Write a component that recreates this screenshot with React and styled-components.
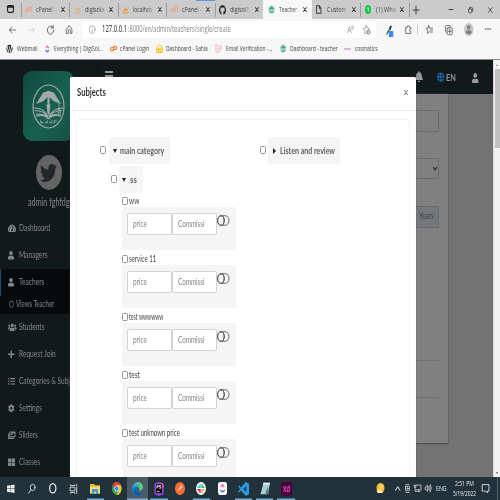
import React, { useLayoutEffect, useRef, useState } from "react";
import styled, { createGlobalStyle, css } from "styled-components";
import {
  FaUser, FaUsers, FaPlus, FaListUl, FaCog, FaImages, FaThLarge, FaBell, FaGlobe,
  FaTwitter, FaWordpress, FaGithub, FaTachometerAlt, FaWindows, FaRegCircle, FaLaravel,
} from "react-icons/fa";

const Global = createGlobalStyle`
  *, *::before, *::after { box-sizing: border-box; }
  body { margin: 0; overflow: hidden; }
`;

const ui = '"Open Sans", "Noto Sans", sans-serif';
const lato = 'Lato, "Open Sans", sans-serif';

/* ---------- shared pieces ---------- */

const LabelBox = styled.span`
  display: block;
  flex: none;
  width: ${(p) => p.$w}px;
  margin-left: ${(p) => p.$ml || 0}px;
  font-size: ${(p) => p.$size || 7.6}px;
  font-weight: ${(p) => p.$weight || 400};
  color: ${(p) => p.$color || "inherit"};
  line-height: 1.2;
  white-space: nowrap;
`;
const LabelInner = styled.span`
  display: inline-block;
  vertical-align: top;
  transform-origin: 0 50%;
`;

function Label({ w, children, ml, size, weight, color }) {
  const ref = useRef(null);
  const [scale, setScale] = useState(0.56);
  useLayoutEffect(() => {
    if (ref.current.offsetWidth) setScale(w / ref.current.offsetWidth);
  }, [w, children]);
  return (
    <LabelBox $w={w} $ml={ml} $size={size} $weight={weight} $color={color}>
      <LabelInner ref={ref} style={{ transform: `scaleX(${scale})` }}>{children}</LabelInner>
    </LabelBox>
  );
}

const IconBox = styled.span`
  display: block;
  flex: none;
  width: ${(p) => p.$w}px;
  height: ${(p) => p.$h}px;
  margin-left: ${(p) => p.$ml || 0}px;
  margin-top: ${(p) => p.$mt || 0}px;
  color: ${(p) => p.$c || "inherit"};
  svg { display: block; width: 100%; height: 100%; overflow: visible; }
`;
const Icon = ({ of: Shape, w, h, c, ml, mt }) => (
  <IconBox $w={w} $h={h} $c={c} $ml={ml} $mt={mt}>
    <Shape preserveAspectRatio="none" />
  </IconBox>
);

const line = (vb, children, sw = 1) => (props) => (
  <svg viewBox={vb} fill="none" stroke="currentColor" strokeWidth={sw} strokeLinecap="round" strokeLinejoin="round" {...props}>
    {children}
  </svg>
);

const Back = line("0 0 16 16", <path d="M15 8H1M7 2 1 8l6 6" />, 1.6);
const Forward = line("0 0 16 16", <path d="M1 8h14M9 2l6 6-6 6" />, 1.6);
const Reload = line("0 0 16 16", <path d="M14 5A7 7 0 1 0 15 9M14 .5V5H9.500" />, 1.6);
const Home = line("0 0 16 16", <path d="M1.500 7 8 1l6.500 6v8h-4v-5a2.500 2.500 0 0 0-5 0v5h-4z" />, 1.5);
const Info = line("0 0 16 16", <><circle cx="8" cy="8" r="7" /><path d="M8 7.500V12M8 4v.5" /></>, 1.3);
const Close = line("0 0 10 10", <path d="M1 1l8 8M9 1 1 9" />, 2.1);
const ThinClose = line("0 0 10 10", <path d="M1 1l8 8M9 1 1 9" />, 1.4);
const Plus = line("0 0 10 10", <path d="M5 0v10M0 5h10" />, 1.4);
const Restore = line("0 0 10 10", <><rect x="1" y="3" width="6.500" height="6.500" rx="2" /><path d="M3 1h4.500Q9.500 1 9.500 3v4" /></>, 1.4);
const Minimize = line("0 0 10 10", <path d="M0 5h10" />, 2);
const TabMenu = line("0 0 12 12", <><rect x="1" y="1" width="10" height="10" rx="2" /><path d="M1 2.500h10" strokeWidth="3" /></>, 1.8);
const ReadAloud = line("0 0 16 16", <path d="M1 14 5.500 3 10 14M3 10h5M11 2q2 2 0 5M13.500 1q3 3 0 7" />, 1.2);
const StarAdd = line("0 0 16 16", <><path d="m7 1 2 4 5 1-4 3M7 1 5 5 0.500 6l3.500 4-.5 5 3-2" /><circle cx="11.500" cy="12" r="3.500" fill="#777" /><path d="M11.500 10v4M9.500 12h4" stroke="#fff" /></>, 1.3);
const Puzzle = line("0 0 16 16", <path d="M2 4h4a2.300 2.300 0 1 1 4.500 0H14v4c-4-1-4 4 0 3.500V15H2v-4c-2 0-2-3 0-3z" />, 1.6);
const Favorites = line("0 0 16 16", <path d="m6 1 2 4.500h7M6 1 4.500 5.500.5 6l3.500 4-.8 5L7 12M9.500 9H15M10 12.500h5" />, 1.5);
const Collections = line("0 0 16 16", <><rect x="4.500" y="4.500" width="11" height="11" rx="2" /><path d="M2.500 12Q.5 11 .8 8V3Q1 .8 3 .8h6q2 0 3 2M10 7v6M7 10h6" /></>, 1.4);
const CPanel = line("0 0 16 14", <><path d="M7.500 5H4.500a3 3 0 0 0 0 6.500H7L9.500 2.500H12a3 3 0 0 1 0 6.500H9.500" /></>, 2.4);
const SailBoat = (p) => (
  <svg viewBox="0 0 16 16" {...p}>
    <path d="M6 1q4 3 2 9L2 11q4-4 4-10zM10 3q5 3 4 7l-5 .5q2-4 1-7.500z" fill="currentColor" />
    <path d="M0 12h16l-2 3.500H3z" fill="currentColor" opacity=".75" />
  </svg>
);
const Picker = (p) => (
  <svg viewBox="0 0 16 22" {...p}>
    <path d="M1 15 8 6l3 2-7 9z" fill="#3c9c73" /><path d="M7 6 11 1q3-1 3 2l-3 6z" fill="#263244" />
    <path d="M1 18 7 9" stroke="#344" strokeWidth="1.500" />
    <rect x="7" y="11" width="11" height="11" rx="1" fill="#4285f4" />
  </svg>
);
const Profile = (p) => (
  <svg viewBox="0 0 20 20" {...p}>
    <circle cx="10" cy="10" r="10" fill="#c9c6c3" /><circle cx="10" cy="6.500" r="3.600" fill="#85817e" /><path d="M3.500 15q0-4 4-4h5q4 0 4 4-6 5-13 0" fill="#85817e" />
  </svg>
);
const Dots = (p) => (
  <svg viewBox="0 0 14 4" {...p}><g fill="#333"><circle cx="2" cy="2" r="1.500" /><circle cx="7" cy="2" r="1.500" /><circle cx="12" cy="2" r="1.500" /></g></svg>
);
const Doc = line("0 0 10 14", <path d="M1 1h5l3 4v8H1zM6 1v4h3" />, 1.6);
const WhatsBadge = (p) => (
  <svg viewBox="0 0 12 18" {...p}><ellipse cx="6" cy="9" rx="6" ry="9" fill="#08c943" /><path d="M4.500 6.500 6.500 5v8" stroke="#fff" strokeWidth="1.600" fill="none" /></svg>
);
const SchoolMark = (p) => (
  <svg viewBox="0 0 16 16" {...p}>
    <circle cx="8" cy="8" r="7.500" fill="#b9ddd4" /><path d="m1.500 6 6.500-4 6.500 4L8 9z" fill="#4ba08f" /><path d="M2 9.500 8 12l6-2.500-2 4.500H4z" fill="#5cb09f" />
  </svg>
);
const ClickUp = (p) => (
  <svg viewBox="0 0 12 16" {...p}>
    <path d="m2 6 4-4 4 4" fill="none" stroke="#ee52b6" strokeWidth="2.400" /><path d="M1.500 10q4.500 7 9 0" fill="none" stroke="#6f62ee" strokeWidth="2.800" />
  </svg>
);
const Sahla = (p) => (
  <svg viewBox="0 0 16 18" {...p}>
    <path d="M1 7 8 1l7 6v10H1z" fill="#fff0b0" stroke="#f4c62d" strokeWidth="2" /><path d="M4 9h8v3H4zM4 13h3v4H4zm5 0h3v4H9z" fill="#efbd20" />
  </svg>
);
const Cosmatics = (p) => (
  <svg viewBox="0 0 16 5" {...p}><path d="M0 2.500h16" stroke="#c793db" strokeWidth="3.500" strokeDasharray="3 .6" /></svg>
);

/* ---------- browser chrome ---------- */

const Screen = styled.div`
  width: 500px; height: 500px; overflow: hidden;
  display: flex; flex-direction: column;
  font-family: ${ui};
`;
const TabStrip = styled.div`
  height: 19px; flex: none; display: flex; background: #cbcbcb; color: #444;
  align-items: stretch;
`;
const TabLead = styled.div`
  width: 20.5px; padding: 5px 0 0 7px; flex: none;
`;
const Tab = styled.div`
  width: 48.5px; flex: none; display: flex; align-items: center; padding-left: 3.5px;
  background: ${(p) => (p.$active ? "#f7f7f7" : "#cbcbcb")};
  ${(p) => p.$marked && css`background: linear-gradient(#5b9bd8, #5b9bd8) 30px 0 / 19px 1px no-repeat #cbcbcb;`}
  &::before {
    content: ""; width: 1px; height: 14px; margin: 0 3.5px 0 -3.5px; flex: none;
    background: ${(p) => (p.$bare ? "transparent" : "#9c9c9c")};
  }
`;
const FavSlot = styled.div`
  width: 11px; flex: none; display: flex; align-items: center;
`;
const TabTitle = styled.div`
  width: 22px; flex: none;
  mask-image: linear-gradient(90deg, #000 65%, rgba(0,0,0,.3) 90%);
`;
const TabClose = styled.div`
  flex: none; padding-left: 2.5px; color: #222;
`;
const WindowButtons = styled.div`
  flex: 1; display: flex; align-items: center; color: #333;
`;

const Toolbar = styled.div`
  height: 21px; flex: none; display: flex; align-items: center; background: #f7f7f7; color: #4a4a4a;
`;
const Address = styled.div`
  width: 294px; height: 17px; margin-left: 9px; border-radius: 2px; background: #fff; flex: none;
  display: flex; align-items: center; color: #888;
`;
const ToolSep = styled.i`
  width: 1px; height: 9px; background: #ccc; margin-left: 6px;
`;
const Bookmarks = styled.div`
  height: 20px; flex: none; display: flex; align-items: center; background: #f7f7f7; color: #3f3f3f;
  padding-bottom: 2px; border-bottom: 1px solid #858585;
`;

const tabs = [
  { of: CPanel, c: "#f0a27c", t: "cPanel -", h: 7 },
  { of: SailBoat, c: "#e2b27c", t: "digisola", h: 8 },
  { of: SailBoat, c: "#ee9a3c", t: "localhos", h: 8 },
  { of: CPanel, c: "#f0a27c", t: "cPanel -", h: 7, marked: true },
  { of: FaGithub, c: "#1b1f23", t: "digisol1", h: 10 },
  { of: SchoolMark, t: "Teacher:", h: 9, active: true },
  { of: Doc, c: "#333", t: "Custom", h: 9, w: 5.5, bare: true },
  { of: WhatsBadge, t: "(1) Wha", h: 9, w: 6 },
];

function BrowserTop() {
  return (
    <>
      <TabStrip>
        <TabLead><Icon of={TabMenu} w={7} h={8} c="#222" /></TabLead>
        {tabs.map((t, i) => (
          <Tab key={i} $active={t.active} $bare={t.bare || t.active} $marked={t.marked}>
            <FavSlot><Icon of={t.of} w={t.w || 7} h={t.h} c={t.c} /></FavSlot>
            <TabTitle><Label w={19.5} size={7.8}>{t.t}</Label></TabTitle>
            <TabClose><Icon of={Close} w={3.8} h={5} /></TabClose>
          </Tab>
        ))}
        <Tab>
          <WindowButtons>
            <Icon of={Plus} w={6} h={8} />
            <Icon of={Minimize} w={4} h={5} ml={29.500} />
            <Icon of={Restore} w={5} h={6} ml={15.500} />
            <Icon of={ThinClose} w={4.5} h={6} ml={15} />
          </WindowButtons>
        </Tab>
      </TabStrip>
      <Toolbar>
        <Icon of={Back} w={7} h={8} ml={8.500} />
        <Icon of={Forward} w={7} h={8} ml={12.500} c="#cfcfcf" />
        <Icon of={Reload} w={7} h={9.500} ml={11.500} />
        <Icon of={Home} w={6.500} h={9} ml={12.500} />
        <Address>
          <Icon of={Info} w={6.500} h={9} ml={7} c="#8c8c8c" />
          <Label w={25.500} ml={7} size={8.700} color="#222">127.0.0.1</Label>
          <Label w={103} size={8.700} color="#858585">:8000/en/admin/teachers/single/create</Label>
          <Icon of={ReadAloud} w={7} h={9} ml={116.500} />
          <Icon of={StarAdd} w={7.500} h={9.500} ml={8.500} />
        </Address>
        <Icon of={Picker} w={6.500} h={12} ml={10} mt={2} />
        <Icon of={Puzzle} w={6.500} h={9} ml={12.500} />
        <ToolSep />
        <Icon of={Favorites} w={7} h={9} ml={7.500} />
        <Icon of={Collections} w={7.500} h={10} ml={12} />
        <Icon of={Profile} w={9.500} h={13} ml={11.500} />
        <Icon of={Dots} w={6} h={2.200} ml={12} />
      </Toolbar>
      <Bookmarks>
        <Icon of={FaWordpress} w={7} h={9.500} ml={6} c="#222" />
        <Label w={20.500} ml={3.500}>Webmail</Label>
        <Icon of={ClickUp} w={4.500} h={8} ml={8} />
        <Label w={48.500} ml={4.500}>Everything | DigiSol...</Label>
        <Icon of={CPanel} w={7} h={7} ml={7} c="#ff6c2c" />
        <Label w={29} ml={3.500}>cPanel Login</Label>
        <Icon of={Sahla} w={7} h={9} ml={6.500} />
        <Label w={42} ml={3.500}>Dashboard - Sahla</Label>
        <Icon of={FaLaravel} w={7} h={9} ml={7} c="#f47b74" />
        <Label w={46.500} ml={3.500}>Email Verification -...</Label>
        <Icon of={SchoolMark} w={6.500} h={9} ml={7.500} />
        <Label w={47.500} ml={3.500}>Dashboard - teacher</Label>
        <Icon of={Cosmatics} w={7} h={2} ml={7} />
        <Label w={22.500} ml={3.500}>cosmatics</Label>
      </Bookmarks>
    </>
  );
}

/* ---------- dimmed page ---------- */

const Viewport = styled.div`
  height: 417px; flex: none; display: flex; position: relative; overflow: hidden;
  font-family: ${lato}; background: #737373;
`;
const Sidebar = styled.aside`
  width: 98px; flex: none; background: #12191b; color: #858889; border-right: 1px solid #0d1214;
  display: flex; flex-direction: column;
`;
const Brand = styled.div`
  width: 51px; height: 70px; margin: 11px 0 0 23px; flex: none; border-radius: 9px;
  background: linear-gradient(125deg, #10483f, #186151 55%, #164f44);
  display: flex; align-items: center; justify-content: center; color: #a5aaa8;
`;
const Avatar = styled.div`
  width: 26px; height: 35px; margin: 14px 0 0 35.500px; flex: none; border-radius: 50%;
  background: #646464; color: #22282a; display: flex; align-items: center; justify-content: center;
`;
const UserName = styled.div`
  height: 18.5px; flex: none; margin: 6px 0 0 27.500px; color: #858889;
`;
const NavItem = styled.div`
  height: ${(p) => (p.$sub ? 18 : 27)}px; flex: none; display: flex; align-items: center;
  padding-left: ${(p) => (p.$active ? 6 : 7)}px;
  background: ${(p) => (p.$active || p.$sub ? "#07090a" : "transparent")};
  ${(p) => p.$active && css`border-left: 1px solid #0a4d83;`}
`;
const NavIcon = styled.div`
  width: ${(p) => (p.$sub ? 9 : 12)}px; flex: none; display: flex; align-items: center;
  padding-left: ${(p) => (p.$sub ? 1.5 : 0.5)}px;
`;
const Main = styled.div`
  flex: 1; display: flex; flex-direction: column;
`;
const Navbar = styled.header`
  height: 34px; flex: none; background: #12191b; display: flex; align-items: center; color: #979a9b;
`;
const Burger = styled.i`
  width: 8.5px; height: 11px; margin: -1px 310px 0 6.5px; flex: none;
  background: repeating-linear-gradient(#969999 0 2px, transparent 2px 4.2px);
`;
const FormPanel = styled.section`
  width: 350px; height: 348.5px; background: #808080; box-shadow: 0 1px 1px #4f4f4f, 1px 0 1px #6b6b6b;
  display: flex; flex-direction: column; align-items: flex-end; padding: 16px 9px 0 0;
`;
const Field = styled.div`
  width: 100px; height: 21.500px; flex: none; border: 1px solid #686b6e; border-radius: 1px; margin-bottom: ${(p) => p.$gap}px;
  display: flex; align-items: center; justify-content: flex-end; padding-right: ${(p) => p.$pr || 1.5}px;
  background: ${(p) => (p.$addon ? "#75777a" : "transparent")}; color: #3c3f42;
`;
const Rule = styled.hr`
  width: 100px; height: 1px; margin: 0 0 36px; border: 0; background: #727272; flex: none;
`;
const ScrollTrack = styled.div`
  width: 7px; flex: none; background: #f1f1f1; border-left: 1px solid #d8d8d8;
  display: flex; flex-direction: column; align-items: center; justify-content: space-between; padding: 4px 0 3px;
  color: #777;
`;
const ScrollThumb = styled.i`
  width: 5px; height: 79px; background: #c1c1c1; margin: 3px 0 auto;
`;
const Triangle = styled.i`
  width: 0; height: 0; flex: none;
  ${(p) => p.$dir === "down" && css`border: solid transparent; border-width: ${p.$s || 4.3}px ${(p.$s || 4.3) * 0.6}px 0; border-top-color: ${p.$c || "#222"};`}
  ${(p) => p.$dir === "up" && css`border: solid transparent; border-width: 0 1.7px 2.5px; border-bottom-color: #888;`}
  ${(p) => p.$dir === "right" && css`border: solid transparent; border-width: 3px 0 3px 3px; border-left-color: #222;`}
`;

const Emblem = (p) => (
  <svg viewBox="0 0 66 88" fill="none" stroke="currentColor" {...p}>
    <ellipse cx="33" cy="44" rx="31" ry="42" strokeWidth="2.200" />
    <path d="M8 39 22 17 33 13 44 17 58 39 43 33 35 26V41H31V26L23 33Z" fill="currentColor" stroke="none" />
    <path d="M29 40h8L35 57l-2 5-2-5z" fill="currentColor" stroke="none" />
    <path d="M54 37v13M52 50h4l1 6h-5z" strokeWidth="1.500" />
    <path d="M3 47q20-1 29 17Q22 57 8 59M63 47q-20-1-29 17 10-7 24-5M6 52q18 0 26 13M60 52q-18 0-26 13M8 63q15-5 25 5 10-10 25-5" strokeWidth="2" />
    <path d="M45 70v6h-3m-2-5v5h-5v-3m-4-2v5h-4v-3m-3 3h-5v-3M17 71v4h4M48 70v5M36 69h1M28 68h2" strokeWidth="1.500" />
  </svg>
);
const Chevron = line("0 0 8 6", <path d="M1 1l3 4 3-4" />, 2);

const nav = [
  { of: FaTachometerAlt, t: "Dashboard", w: 31.5, iw: 8 },
  { of: FaUser, t: "Managers", w: 28.5, iw: 6 },
  { of: FaUser, t: "Teachers", w: 25.5, iw: 6, active: true },
  { of: FaRegCircle, t: "Views Teacher", w: 38, iw: 5, ih: 6.5, sub: true },
  { of: FaUsers, t: "Students", w: 25.5, iw: 8.5 },
  { of: FaPlus, t: "Request Join", w: 36.5, iw: 6.5 },
  { of: FaListUl, t: "Categories & Subjects", w: 62.5, iw: 7 },
  { of: FaCog, t: "Settings", w: 23, iw: 6.5 },
  { of: FaImages, t: "Sliders", w: 19, iw: 7.5 },
  { of: FaThLarge, t: "Classes", w: 21, iw: 7 },
];

function SideNav() {
  return (
    <Sidebar>
      <Brand><Icon of={Emblem} w={33} h={45} /></Brand>
      <Avatar><Icon of={FaTwitter} w={17} h={22} /></Avatar>
      <UserName><Label w={42} size={10.500}>admin fghfdg</Label></UserName>
      {nav.map((n) => (
        <NavItem key={n.t} $active={n.active} $sub={n.sub}>
          <NavIcon $sub={n.sub}><Icon of={n.of} w={n.iw} h={n.ih || 8.5} /></NavIcon>
          <Label w={n.w} size={n.sub ? 8.8 : 9.6}>{n.t}</Label>
        </NavItem>
      ))}
    </Sidebar>
  );
}

/* ---------- modal ---------- */

const Modal = styled.div`
  position: absolute; left: 69.500px; top: 16.5px; width: 346.500px; height: 420px; overflow: hidden;
  background: #fff; border-radius: 1.500px 1.500px 0 0; box-shadow: 0 0 1px #444; color: #444;
`;
const ModalHeader = styled.div`
  height: 34.500px; border-bottom: 1px solid #ececec; display: flex; justify-content: space-between;
  align-items: center; padding: 0 8px 2px 7px;
`;
const Tree = styled.div`
  margin: 9px 7px 0 7px; height: 380px; border-radius: 2px; box-shadow: 0 0 2px rgba(0,0,0,.17);
  display: grid; grid-template-columns: 160px 1fr; padding: 17px 0 0 23.500px;
`;
const Branch = styled.div`
  display: flex; flex-direction: column; gap: 2px;
`;
const Row = styled.div`
  display: flex; align-items: center; margin-left: ${(p) => p.$indent || 0}px;
  gap: ${(p) => p.$gap}px; height: 27px;
`;
const Box = styled.i`
  width: 6px; height: 8px; flex: none; border: 1px solid #929292; border-radius: 1.500px; background: #fff;
  margin-top: -1px;
`;
const Pill = styled.div`
  width: ${(p) => p.$w}px; height: 27px; border-radius: 2px; background: #f5f5f5; display: flex; align-items: center;
  padding-left: ${(p) => p.$pl || 3.5}px; flex: none;
`;
const Leaves = styled.div`
  margin: 0 0 0 22px; display: flex; flex-direction: column;
`;
const Leaf = styled.div`
  height: 58px; flex: none;
`;
const LeafHead = styled.div`
  height: 12px; display: flex; align-items: center; gap: 1px;
`;
const LeafBody = styled.div`
  width: 114px; height: 43.500px; background: #f5f5f5; border-radius: 1.500px; padding: 6.5px 0 0 5px;
  display: flex; align-items: flex-start; margin-top: -.5px;
`;
const Input = styled.div`
  width: 45px; height: 22px; border: 1px solid #ced4da; border-radius: 2px; background: #fff; color: #7d858c;
  display: flex; align-items: center; padding: 1.5px 0 0 4.500px; flex: none;
`;
const Toggle = line("0 0 26 22", <><rect x="1" y="1.500" width="24" height="19" rx="7.500" ry="9.500" /><ellipse cx="8.500" cy="11" rx="7" ry="9.500" /><path d="M12 2q6 9 0 18" /></>, 1.8);

const leaves = [
  ["ww", 10], ["service 11", 27], ["test wwwwww", 34.5], ["test", 10.5], ["test unknown price", 50.5],
];

function SubjectsModal() {
  return (
    <Modal>
      <ModalHeader>
        <Label w={28.500} size={10.500} weight={700} color="#343434">Subjects</Label>
        <Icon of={Close} w={4} h={5} c="#777" />
      </ModalHeader>
      <Tree>
        <Branch>
          <Row $gap={3}>
            <Box />
            <Pill $w={61}><Triangle $dir="down" /><Label w={44.500} ml={3.500} size={9.500} weight={700} color="#606060">main category</Label></Pill>
          </Row>
          <Row $gap={1.5} $indent={11}>
            <Box />
            <Pill $w={24}><Triangle $dir="down" /><Label w={6.500} ml={4} size={9.500} weight={700} color="#606060">ss</Label></Pill>
          </Row>
          <Leaves>
            {leaves.map(([name, w]) => (
              <Leaf key={name}>
                <LeafHead><Box /><Label w={w} size={9.200} color="#3d3d3d">{name}</Label></LeafHead>
                <LeafBody>
                  <Input><Label w={14} size={8.800}>price</Label></Input>
                  <Input><Label w={26.500} size={8.800}>Commissi</Label></Input>
                  <Icon of={Toggle} w={12.500} h={11} mt={2} c="#555" />
                </LeafBody>
              </Leaf>
            ))}
          </Leaves>
        </Branch>
        <Branch>
          <Row $gap={2}>
            <Box />
            <Pill $w={71.5} $pl={4.5}><Triangle $dir="right" /><Label w={55} ml={4.500} size={9.500} weight={700} color="#606060">Listen and review</Label></Pill>
          </Row>
        </Branch>
      </Tree>
    </Modal>
  );
}

/* ---------- taskbar ---------- */

const Taskbar = styled.footer`
  height: 23px; flex: none; display: flex; align-items: stretch; background: #21323b; color: #e9ecee;
`;
const TaskButton = styled.div`
  width: 21.200px; flex: none; display: flex; align-items: center; justify-content: center;
  background: ${(p) => (p.$focus ? "#4b5a62" : "transparent")};
  box-shadow: ${(p) => (p.$open ? "inset 0 -1.500px #76b0e2" : "none")};
  border: solid #21323b; border-width: 0 ${(p) => (p.$focus ? 0 : 2)}px;
`;
const Tray = styled.div`
  margin-left: auto; width: 124px; display: flex; align-items: center; flex: none;
`;
const Clock = styled.div`
  width: 24px; margin-left: 6px; display: flex; flex-direction: column; align-items: center; gap: 1px;
  padding-bottom: 1px;
`;
const ShowDesktop = styled.i`
  width: 3px; height: 23px; margin-left: auto; border-left: 1px solid #566169;
`;

const Search = line("0 0 12 16", <><ellipse cx="7.500" cy="5.500" rx="4" ry="5" /><path d="M4.500 9.500.5 15" /></>, 1.3);
const Cortana = line("0 0 12 16", <ellipse cx="6" cy="8" rx="5" ry="7" />, 2);
const TaskView = line("0 0 14 16", <><rect x="1" y="5" width="8" height="6" /><path d="M1 1v1.500h8V1M1 15v-1.500h8V15M12.500 1v2M12.500 7v8M12 5h1" /></>, 1.4);
const Folder = (p) => (
  <svg viewBox="0 0 20 20" {...p}><path d="M0 2h8l2 2h10v15H0z" fill="#f2b935" /><path d="M0 7h20v12H0z" fill="#ffdc72" /><path d="M4 11h12v9h-4v-4H8v4H4z" fill="#3b9cdd" /></svg>
);
const ChromeLogo = (p) => (
  <svg viewBox="0 0 20 20" {...p}>
    <circle cx="10" cy="10" r="10" fill="#36a852" /><path d="M1.340 5A10 10 0 0 1 18.660 5H10l-4.300 7.500z" fill="#e94235" /><path d="M18.660 5A10 10 0 0 1 10 20l4.300-7.500L10 5z" fill="#fcc31e" />
    <circle cx="10" cy="10" r="4.800" fill="#fff" /><circle cx="10" cy="10" r="3.800" fill="#4285f4" />
  </svg>
);
const EdgeLogo = (p) => (
  <svg viewBox="0 0 20 20" {...p}>
    <defs><linearGradient id="edgeTop"><stop stopColor="#229de4" /><stop offset="1" stopColor="#67d85d" /></linearGradient></defs>
    <circle cx="10" cy="10" r="10" fill="#1677cb" /><path d="M0 10C1-3 20-3 20 8c0 5-7 6-8 3 3-4-5-8-12-1z" fill="url(#edgeTop)" />
    <path d="M8 9c-2 5 3 9 10 6-5 6-14 5-14-1 0-3 1-5 4-5z" fill="#0c549d" /><path d="M9 9q-2 6 6 6.500 3 0 5-2.500V9q-2 5-7 3-1-1 0-3-2-2-4 0z" fill="#4b5a62" />
  </svg>
);
const PhpStorm = (p) => (
  <svg viewBox="0 0 20 20" {...p}><path d="M1 2 9 0l10 3v14l-9 3-9-3z" fill="#9c43ec" /><path d="M12 0l7 3v7z" fill="#ef55c0" /><path d="M4 3h12v13H4z" fill="#080808" /><path d="M6 9V5h2.500v2H6M14 5h-3v2h2.500v2H10.500M6 13.500h5" stroke="#fff" strokeWidth="1.300" fill="none" /></svg>
);
const PostmanLogo = (p) => (
  <svg viewBox="0 0 20 20" {...p}><circle cx="10" cy="10" r="10" fill="#ff6c37" /><path d="m5 15 2-3 6-7 2 2-7 6z" fill="#ffe9df" /></svg>
);
const SlackLogo = (p) => (
  <svg viewBox="0 0 20 20" {...p}><circle cx="10" cy="10" r="10" fill="#fff" /><g strokeWidth="2.600" strokeLinecap="round"><path d="M8 4v4H4" stroke="#36c5f0" fill="none" /><path d="M12 4v4h4" stroke="#2eb67d" fill="none" /><path d="M8 16v-4H4" stroke="#e01e5a" fill="none" /><path d="M12 16v-4h4" stroke="#ecb22e" fill="none" /></g></svg>
);
const ClickUpTile = (p) => (
  <svg viewBox="0 0 20 20" {...p}><rect width="20" height="20" rx="5" fill="#fff" /><path d="m6 8 4-4 4 4" stroke="#f25dad" strokeWidth="2.500" fill="none" /><path d="M5 12q5 6 10 0" stroke="#7262f2" strokeWidth="2.700" fill="none" /></svg>
);
const CodeLogo = (p) => (
  <svg viewBox="0 0 20 20" {...p}><path d="m14 0 6 2.500v15L14 20 5.500 12 2 15 0 14l4-4-4-4 2-1 3.500 3zM15 6l-5.500 4 5.500 4z" fill="#269be2" fillRule="evenodd" /></svg>
);
const Notepad = (p) => (
  <svg viewBox="0 0 20 20" {...p}><path d="M7 1h13l-4 18H1z" fill="#a9d0d5" /><path d="M7 1h13l-1 3H6z" fill="#e5f0ef" /><path d="M16 7l1 12H10z" fill="#537c82" /></svg>
);
const XdTile = styled.div`
  width: 11px; height: 14px; border-radius: 2px; background: #470137; color: #ff61f6;
  display: flex; align-items: center; justify-content: center; flex: none;
`;
const Weather = (p) => (
  <svg viewBox="0 0 20 20" {...p}><circle cx="10" cy="9" r="9" fill="#f9b52b" /><circle cx="12" cy="7" r="5" fill="#ffd466" /><path d="M3 18q-3-5 2-6 4-3 6 1 4 0 4 5z" fill="#fbe3ae" /></svg>
);
const Caret = line("0 0 10 8", <path d="m1 7 4-6 4 6" />, 1.6);
const Camera = line("0 0 10 16", <><rect x="1" y="4" width="8" height="8" rx="1" /><circle cx="5" cy="8" r="1.500" /><path d="M2 1h6M2 15h6" /></>, 1.3);
const Network = line("0 0 16 16", <><path d="M5 2h10v9H4M8 14h5M10 11v3" /><path d="M1 2h3v4H1zM2.500 6v8h3" /></>, 1.4);
const Volume = line("0 0 16 16", <path d="M1 6h2l3-4v12L3 10H1zM9 5q2 3 0 6M11.500 3q3 5 0 10M13.500 1q4 7 0 14" />, 1.3);
const Notice = line("0 0 14 16", <path d="M1 1h12v11h-3v3l-3-3H1z" />, 1.5);

const apps = [
  { of: FaWindows, w: 7.5, h: 9.5 }, { of: Search, w: 7.5, h: 10 }, { of: Cortana, w: 7.5, h: 10.5 }, { of: TaskView, w: 7.5, h: 10 },
  { of: Folder, w: 10, h: 11, open: true }, { of: ChromeLogo, w: 9.5, h: 13 }, { of: EdgeLogo, w: 11, h: 14, open: true, focus: true },
  { of: PhpStorm, w: 10, h: 14, open: true }, { of: PostmanLogo, w: 10, h: 13 }, { of: SlackLogo, w: 10, h: 13, open: true },
  { of: ClickUpTile, w: 9, h: 13 }, { of: CodeLogo, w: 11, h: 14, open: true }, { of: Notepad, w: 10, h: 13, open: true },
];

export default function App() {
  return (
    <Screen>
      <Global />
      <BrowserTop />
      <Viewport>
        <SideNav />
        <Main>
          <Navbar>
            <Burger />
            <Icon of={FaBell} w={8} h={11} ml={-8} mt={-1} />
            <Icon of={FaGlobe} w={7.500} h={10} ml={14} mt={-1} c="#1f65a8" />
            <Label w={9.500} ml={1.500} size={10} weight={700}>EN</Label>
            <Icon of={FaUser} w={6.500} h={10} ml={16} mt={1} />
          </Navbar>
          <FormPanel>
            <Field $gap={26} />
            <Field $gap={27}><Icon of={Chevron} w={4} h={3.500} c="#222" /></Field>
            <Field $gap={132.5} $addon $pr={4.5}><Label w={15} size={8.800}>Years</Label></Field>
            <Rule /><Rule />
          </FormPanel>
        </Main>
        <ScrollTrack>
          <Triangle $dir="up" />
          <ScrollThumb />
          <Triangle $dir="down" $s={2.5} $c="#555" />
        </ScrollTrack>
        <SubjectsModal />
      </Viewport>
      <Taskbar>
        {apps.map((a, i) => (
          <TaskButton key={i} $open={a.open} $focus={a.focus}><Icon of={a.of} w={a.w} h={a.h} /></TaskButton>
        ))}
        <TaskButton $open><XdTile><Label w={7} size={8} weight={600}>Xd</Label></XdTile></TaskButton>
        <Tray>
          <Icon of={Weather} w={9} h={11} />
          <Icon of={Caret} w={5.500} h={5} ml={9.500} />
          <Icon of={Camera} w={5} h={9} ml={5} />
          <Icon of={Network} w={7.500} h={8.500} ml={4} />
          <Icon of={Volume} w={6.500} h={8.500} ml={3.500} />
          <Label w={10.500} ml={4.500} size={7.500}>ENG</Label>
          <Clock>
            <Label w={19} size={7.200}>2:51 PM</Label>
            <Label w={23} size={7.200}>5/19/2022</Label>
          </Clock>
          <Icon of={Notice} w={7.500} h={9.500} ml={5.500} />
          <ShowDesktop />
        </Tray>
      </Taskbar>
    </Screen>
  );
}
